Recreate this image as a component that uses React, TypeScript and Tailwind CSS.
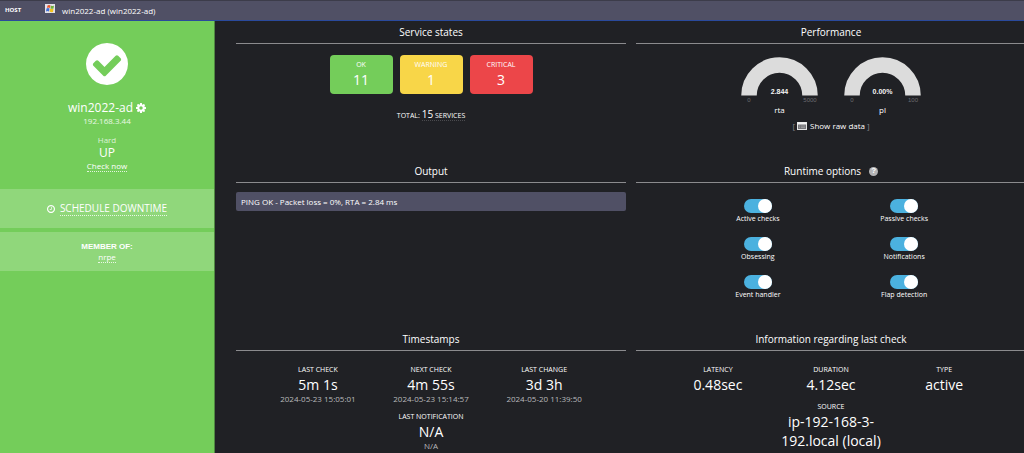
import { useState } from "react";
import type { ReactNode } from "react";

type Stat = { label: string; value: string; note?: string };

const SERVICES = [
  { label: "OK", count: 11, color: "bg-[#74cd5a]" },
  { label: "WARNING", count: 1, color: "bg-[#f8d648]" },
  { label: "CRITICAL", count: 3, color: "bg-[#ec4649]" },
];

const GAUGES = [
  { name: "rta", value: "2.844", min: "0", max: "5000" },
  { name: "pl", value: "0.00%", min: "0", max: "100" },
];

const OPTIONS = [
  "Active checks",
  "Passive checks",
  "Obsessing",
  "Notifications",
  "Event handler",
  "Flap detection",
];

const TIMESTAMPS: Stat[] = [
  { label: "LAST CHECK", value: "5m 1s", note: "2024-05-23 15:05:01" },
  { label: "NEXT CHECK", value: "4m 55s", note: "2024-05-23 15:14:57" },
  { label: "LAST CHANGE", value: "3d 3h", note: "2024-05-20 11:39:50" },
  { label: "LAST NOTIFICATION", value: "N/A", note: "N/A" },
];

const LAST_CHECK: Stat[] = [
  { label: "LATENCY", value: "0.48sec" },
  { label: "DURATION", value: "4.12sec" },
  { label: "TYPE", value: "active" },
  { label: "SOURCE", value: "ip-192-168-3-192.local (local)" },
];

const CHECK_CIRCLE =
  "M1412 734q0-28-18-46l-91-90q-19-19-45-19t-45 19l-408 407-226-226q-19-19-45-19t-45 19l-91 90q-18 18-18 46 0 27 18 45l362 362q19 19 45 19 27 0 46-19l543-543q18-18 18-45zm252 162q0 209-103 385.5t-279.5 279.5-385.5 103-385.5-103-279.5-279.5-103-385.5 103-385.5 279.5-279.5 385.5-103 385.5 103 279.5 279.5 103 385.5z";
const COG =
  "M1152 896q0-106-75-181t-181-75-181 75-75 181 75 181 181 75 181-75 75-181zm512-109v222q0 12-8 23t-20 13l-185 28q-19 54-39 91 35 50 107 138 10 12 10 25t-9 23q-27 37-99 108t-94 71q-12 0-26-9l-138-108q-44 23-91 38-16 136-29 186-7 28-36 28h-222q-14 0-24.5-8.5t-11.5-21.5l-28-184q-49-16-90-37l-141 107q-10 9-25 9-14 0-25-11-126-114-165-168-7-10-7-23 0-12 8-23 15-21 51-66.5t54-70.5q-27-50-41-99l-183-27q-13-2-21-12.5t-8-23.5v-222q0-12 8-23t19-13l186-28q14-46 39-92-40-57-107-138-10-12-10-24 0-10 9-23 26-36 98.5-107.5t94.5-71.5q13 0 26 10l138 107q44-23 91-38 16-136 29-186 7-28 36-28h222q14 0 24.5 8.5t11.5 21.5l28 184q49 16 90 37l142-107q9-9 24-9 13 0 25 10 129 119 165 170 7 8 7 22 0 12-8 23-15 21-51 66.5t-54 70.5q26 50 41 98l183 28q13 2 21 12.5t8 23.5z";
const CLOCK =
  "M1024 544v448q0 14-9 23t-23 9h-320q-14 0-23-9t-9-23v-64q0-14 9-23t23-9h224v-352q0-14 9-23t23-9h64q14 0 23 9t9 23zm416 352q0-148-73-273t-198-198-273-73-273 73-198 198-73 273 73 273 198 198 273 73 273-73 198-198 73-273zm224 0q0 209-103 385.5t-279.5 279.5-385.5 103-385.5-103-279.5-279.5-103-385.5 103-385.5 279.5-279.5 385.5-103 385.5 103 279.5 279.5 103 385.5z";

function Icon({ d, className }: { d: string; className: string }) {
  return (
    <svg viewBox="128 128 1536 1536" className={className} fill="currentColor" aria-hidden="true">
      <path d={d} />
    </svg>
  );
}

function WindowsIcon() {
  return (
    <svg viewBox="0 0 20 18" className="h-[9px] w-[10px]" aria-hidden="true">
      <rect width="20" height="18" fill="#e4e2ea" />
      <path d="M5 3q3-2 6 0L10 8q-3-2-6 0z" fill="#e8552c" />
      <path d="M12 3q3 2 6 0l-1 6q-3 1-6 0z" fill="#6fb13c" />
      <path d="M3 9q3-2 6 0l-1 6q-3-2-6 0z" fill="#3f6fd8" />
      <path d="M10 9q4 2 7 0l-1 7q-4 1-7-1z" fill="#f2c21c" />
    </svg>
  );
}

function Panel({ title, extra, children }: { title: string; extra?: ReactNode; children: ReactNode }) {
  return (
    <section className="min-w-0">
      <div className="flex h-[23px] items-center justify-center gap-2 border-b border-[#8b8b8e]">
        <h2 className="text-[10px] leading-4">{title}</h2>
        {extra}
      </div>
      {children}
    </section>
  );
}

function Gauge({ name, value, min, max }: (typeof GAUGES)[number]) {
  return (
    <figure className="w-[103px] text-center">
      <svg viewBox="0 0 103 48" className="w-full" role="img" aria-label={`${name} ${value}`}>
        <path d="M21 39.500a30.500 30.500 0 0 1 61 0" fill="none" stroke="#dcdcdc" strokeWidth="15.500" />
        <g fontFamily="Liberation Sans, sans-serif" textAnchor="middle">
          <text x="51.500" y="38" fontSize="7" fontWeight="bold" fill="#f4f4f4">
            {value}
          </text>
          <text x="21" y="46" fontSize="6" fill="#6c6c70">
            {min}
          </text>
          <text x="82" y="46" fontSize="6" fill="#6c6c70">
            {max}
          </text>
        </g>
      </svg>
      <figcaption className="text-[8px] leading-3">{name}</figcaption>
    </figure>
  );
}

function Toggle({ label }: { label: string }) {
  const [on, setOn] = useState(true);
  return (
    <label className="flex h-[38px] flex-col items-center">
      <input
        type="checkbox"
        role="switch"
        checked={on}
        onChange={() => setOn(!on)}
        className="flex h-[14px] w-7 shrink-0 appearance-none rounded-full bg-[#7b7b80] before:size-[14px] before:rounded-full before:bg-white checked:justify-end checked:bg-[#4bb1df]"
      />
      <span className="text-[7px] leading-3">{label}</span>
    </label>
  );
}

function Stats({ items }: { items: Stat[] }) {
  return (
    <dl className="mx-auto flex w-[87%] flex-wrap justify-center pt-[14px]">
      {items.map((s) => (
        <div key={s.label} className="mb-2 flex w-1/3 flex-col items-center px-1 text-center">
          <dt className="text-[7px] leading-[10px]">{s.label}</dt>
          <dd className="text-[14px] leading-[19px]">{s.value}</dd>
          {s.note && <dd className="text-[8px] leading-[10px] text-[#b9b9bc]">{s.note}</dd>}
        </div>
      ))}
    </dl>
  );
}

function Sidebar() {
  return (
    <aside className="w-[21%] shrink-0 border-r border-[#4f8741] bg-[#74cd5a] text-center">
      <div className="flex h-[168px] flex-col items-center pt-[22px]">
        <Icon d={CHECK_CIRCLE} className="size-[42px]" />
        <h1 className="mt-[15px] flex items-center gap-[3px] text-[12px] leading-4">
          win2022-ad
          <button type="button" aria-label="Host settings">
            <Icon d={COG} className="size-[10px]" />
          </button>
        </h1>
        <p className="text-[8px] leading-[10px] text-white/85">192.168.3.44</p>
        <p className="mt-[9px] text-[8px] leading-[10px] text-white/75">Hard</p>
        <p className="text-[12px] leading-4">UP</p>
        <a href="#check" className="border-b border-dotted border-white/80 text-[8px] leading-[10px]">
          Check now
        </a>
      </div>
      <div className="flex h-[39px] items-center justify-center gap-[5px] bg-[#90d77b]">
        <Icon d={CLOCK} className="size-2" />
        <a href="#downtime" className="border-b border-dotted border-white/80 text-[10px] leading-[14px]">
          SCHEDULE DOWNTIME
        </a>
      </div>
      <div className="mt-1 flex h-[39px] flex-col items-center justify-center bg-[#90d77b] pt-px">
        <h2 className="font-['Liberation_Sans',sans-serif] text-[8px] leading-[10px] font-bold">MEMBER OF:</h2>
        <a href="#nrpe" className="border-b border-dotted border-white/80 text-[8px] leading-[10px]">
          nrpe
        </a>
      </div>
    </aside>
  );
}

export default function App() {
  return (
    <div className="flex min-h-screen flex-col overflow-x-hidden bg-[#202125] font-['Open_Sans','Noto_Sans',sans-serif] text-white">
      <header className="flex h-[21px] items-center border-t border-b border-t-[#3c3c4a] border-b-[#2a4a9c] bg-[#505065] pl-[5px]">
        <span className="w-10 text-[6px] font-bold">HOST</span>
        <div className="flex items-start gap-[7px] text-[8px] leading-3">
          <WindowsIcon />
          <span className="pt-px">win2022-ad (win2022-ad)</span>
        </div>
      </header>

      <div className="flex flex-1">
        <Sidebar />
        <main className="-mr-[2px] grid flex-1 grid-cols-2 grid-rows-[139px_168px_auto] gap-x-[10px] pl-[21px]">
          <Panel title="Service states">
            <ul className="flex justify-center gap-[7px] pt-[11px]">
              {SERVICES.map((s) => (
                <li
                  key={s.label}
                  className={`flex h-[39px] w-[63px] flex-col items-center justify-center rounded ${s.color}`}
                >
                  <span className="text-[7px] leading-[10px]">{s.label}</span>
                  <span className="text-[14px] leading-5">{s.count}</span>
                </li>
              ))}
            </ul>
            <p className="pt-3 text-center text-[7px] leading-4">
              TOTAL:{" "}
              <a href="#services" className="border-b border-dotted border-[#4a4a4e]">
                <span className="text-[10px]">15</span> SERVICES
              </a>
            </p>
          </Panel>

          <Panel title="Performance">
            <div className="flex justify-center pt-3">
              {GAUGES.map((g) => (
                <Gauge key={g.name} {...g} />
              ))}
            </div>
            <div className="flex items-center justify-center gap-[2px] pt-1 text-[8px] leading-3">
              <span className="text-[#8b8b8e]">[</span>
              <button type="button" className="flex items-center gap-[3px]">
                <svg viewBox="0 0 20 16" className="h-2 w-[10px]" aria-hidden="true">
                  <rect x="1" y="1" width="18" height="14" fill="#77777b" stroke="#e4e4e4" strokeWidth="2" />
                  <path d="M1 3h18" stroke="#f4f4f4" strokeWidth="4" />
                  <path d="M4 8h2m2 0h8M4 11h2m2 0h8" stroke="#b4b4b6" strokeWidth="1" />
                </svg>
                Show raw data
              </button>
              <span className="text-[#8b8b8e]">]</span>
            </div>
          </Panel>

          <Panel title="Output">
            <p className="mt-[9px] rounded-xs bg-[#505065] px-[5px] text-[8px] leading-[19px]">
              PING OK - Packet loss = 0%, RTA = 2.84 ms
            </p>
          </Panel>

          <Panel
            title="Runtime options"
            extra={
              <button
                type="button"
                aria-label="Help"
                className="flex size-[9px] items-center justify-center rounded-full bg-[#b4b4b6] font-['Liberation_Sans',sans-serif] text-[8px] leading-none font-bold text-white"
              >
                ?
              </button>
            }
          >
            <div className="mx-auto grid w-3/4 grid-cols-2 pt-4">
              {OPTIONS.map((o) => (
                <Toggle key={o} label={o} />
              ))}
            </div>
          </Panel>

          <Panel title="Timestamps">
            <Stats items={TIMESTAMPS} />
          </Panel>

          <Panel title="Information regarding last check">
            <Stats items={LAST_CHECK} />
          </Panel>
        </main>
      </div>
    </div>
  );
}
